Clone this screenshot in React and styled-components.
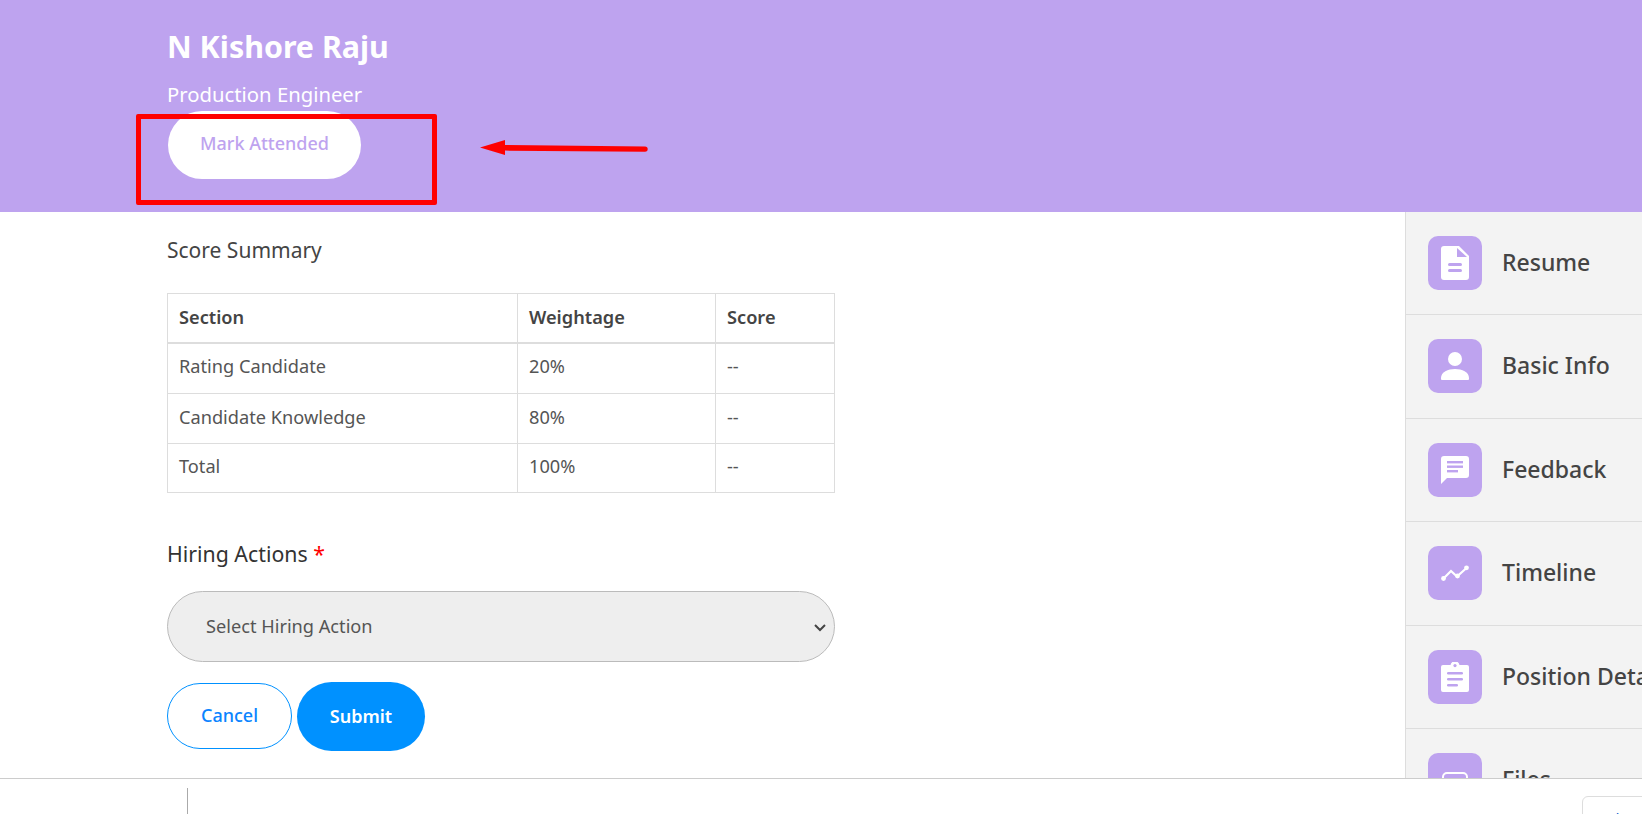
import React from "react";
import styled, { createGlobalStyle } from "styled-components";

const purple = "#bea3ef";
const FONT = `"Noto Sans", "Open Sans", sans-serif`;

const rows = [
  ["Rating Candidate", "20%", "--"],
  ["Candidate Knowledge", "80%", "--"],
  ["Total", "100%", "--"],
];

const DocIcon = () => (
  <svg width="28" height="34" viewBox="0 0 28 34">
    <path d="M3 0h15l10 10v21a3 3 0 0 1-3 3H3a3 3 0 0 1-3-3V3a3 3 0 0 1 3-3z" fill="#fff" />
    <path d="M16 2v9h10z" fill={purple} />
    <rect x="7" y="17" width="14" height="3" rx="1.5" fill={purple} />
    <rect x="7" y="23" width="14" height="3" rx="1.5" fill={purple} />
  </svg>
);

const UserIcon = () => (
  <svg width="28" height="28" viewBox="0 0 28 28">
    <circle cx="14" cy="7" r="7" fill="#fff" />
    <path d="M0 26c0-6 7-9 14-9s14 3 14 9v1a1 1 0 0 1-1 1H1a1 1 0 0 1-1-1z" fill="#fff" />
  </svg>
);

const ChatIcon = () => (
  <svg width="28" height="28" viewBox="0 0 28 28">
    <path d="M3 0h22a3 3 0 0 1 3 3v16a3 3 0 0 1-3 3H6l-6 6V3a3 3 0 0 1 3-3z" fill="#fff" />
    <rect x="6" y="5" width="16" height="2.4" fill={purple} />
    <rect x="6" y="9.5" width="16" height="2.4" fill={purple} />
    <rect x="6" y="14" width="11" height="2.4" fill={purple} />
  </svg>
);

const TrendIcon = () => (
  <svg width="28" height="16" viewBox="0 0 28 16" fill="none">
    <path d="M2.5 13.5L10 6l6 5.5L25.5 3" stroke="#fff" strokeWidth="2.2" />
    <circle cx="2.5" cy="13.5" r="2.4" fill="#fff" />
    <circle cx="16.5" cy="11" r="2.4" fill="#fff" />
    <circle cx="25.5" cy="2.8" r="2.4" fill="#fff" />
  </svg>
);

const ClipboardIcon = () => (
  <svg width="28" height="30" viewBox="0 0 28 30">
    <path d="M2 3h7.5a4.6 4.6 0 0 1 9 0H26a2 2 0 0 1 2 2v23a2 2 0 0 1-2 2H2a2 2 0 0 1-2-2V5a2 2 0 0 1 2-2z" fill="#fff" />
    <circle cx="14" cy="3.6" r="1.6" fill={purple} />
    <rect x="6" y="10" width="16" height="2.6" rx="1.3" fill={purple} />
    <rect x="6" y="16" width="16" height="2.6" rx="1.3" fill={purple} />
    <rect x="6" y="22" width="11" height="2.6" rx="1.3" fill={purple} />
  </svg>
);

const FolderIcon = () => (
  <svg width="26" height="16" viewBox="0 0 26 16" fill="none">
    <rect x="1" y="1" width="24" height="14" rx="4" stroke="#fff" strokeWidth="2" />
  </svg>
);

const tabs = [
  ["Resume", <DocIcon />],
  ["Basic Info", <UserIcon />],
  ["Feedback", <ChatIcon />],
  ["Timeline", <TrendIcon />],
  ["Position Details", <ClipboardIcon />],
  ["Files", <FolderIcon />],
];

function App() {
  return (
    <Page>
      <GlobalStyle />
      <Header>
        <Name>N Kishore Raju</Name>
        <Role>Production Engineer</Role>
        <AttendButton>Mark Attended</AttendButton>
      </Header>
      <Body>
        <Main>
          <SectionTitle>Score Summary</SectionTitle>
          <ScoreTable>
            <colgroup>
              <col style={{ width: 350 }} />
              <col style={{ width: 198 }} />
              <col />
            </colgroup>
            <thead>
              <tr>
                <Th>Section</Th>
                <Th>Weightage</Th>
                <Th>Score</Th>
              </tr>
            </thead>
            <tbody>
              {rows.map((r) => (
                <tr key={r[0]}>
                  {r.map((c, i) => (
                    <Td key={i}>{c}</Td>
                  ))}
                </tr>
              ))}
            </tbody>
          </ScoreTable>
          <FieldLabel>
            Hiring Actions <Required>*</Required>
          </FieldLabel>
          <SelectBox>
            <SelectText>Select Hiring Action</SelectText>
            <svg width="14" height="14" viewBox="0 0 14 14" fill="none">
              <path d="M2 5l5 5 5-5" stroke="#444" strokeWidth="2" />
            </svg>
          </SelectBox>
          <Actions>
            <CancelButton>Cancel</CancelButton>
            <SubmitButton>Submit</SubmitButton>
          </Actions>
        </Main>
        <Side>
          {tabs.map(([label, icon]) => (
            <SideRow key={label}>
              <IconTile>{icon}</IconTile>
              <SideLabel>{label}</SideLabel>
            </SideRow>
          ))}
        </Side>
      </Body>
      <Footer>
        <FooterRule />
        <FooterButton>Sh</FooterButton>
      </Footer>
      {/* annotation drawn on top of the screenshot */}
      <RedBox />
      <RedArrow width="170" height="18" viewBox="0 0 170 18">
        <path d="M0 8.5L25 1v5l140 1.4a2.7 2.7 0 0 1 0 5.4L25 11.6V16z" fill="#ff0000" />
      </RedArrow>
    </Page>
  );
}

const GlobalStyle = createGlobalStyle`
  html, body {
    margin: 0;
    padding: 0;
    height: 100%;
    overflow: hidden;
    background: #fff;
  }
  * {
    box-sizing: border-box;
  }
`;

const Page = styled.div`
  position: relative;
  width: 1642px;
  height: 814px;
  overflow: hidden;
  display: flex;
  flex-direction: column;
  font-family: ${FONT};
  color: #444;
`;

const Header = styled.div`
  height: 212px;
  flex-shrink: 0;
  background: ${purple};
  padding: 27px 0 0 167px;
`;

const Name = styled.div`
  font-size: 30.4px;
  line-height: 40px;
  font-weight: 700;
  color: #fff;
`;

const Role = styled.div`
  margin-top: 14px;
  font-size: 20.3px;
  line-height: 27px;
  color: #fff;
`;

const AttendButton = styled.div`
  width: 193px;
  height: 68px;
  margin: 3px 0 0 1px;
  padding-top: 18px;
  border-radius: 34px;
  background: #fff;
  color: ${purple};
  font-size: 18px;
  line-height: 28px;
  font-weight: 500;
  text-align: center;
`;

const Body = styled.div`
  flex: 1;
  min-height: 0;
  display: flex;
`;

const Main = styled.div`
  width: 1405px;
  flex-shrink: 0;
  padding: 25px 0 0 167px;
`;

const SectionTitle = styled.div`
  font-size: 21px;
  line-height: 27px;
  color: #444;
`;

const ScoreTable = styled.table`
  width: 668px;
  margin-top: 29px;
  border-collapse: collapse;
  table-layout: fixed;
  font-size: 18.2px;
`;

const Th = styled.th`
  height: 49px;
  padding: 0 11px 1px;
  border: 1px solid #ddd;
  border-bottom-width: 2px;
  text-align: left;
  font-weight: 600;
  color: #444;
`;

const Td = styled.td`
  height: 50px;
  padding: 0 11px 4px;
  border: 1px solid #ddd;
  color: #555;

  tr:first-child & {
    height: 51px;
  }

  tr:last-child & {
    height: 49px;
  }
`;

const FieldLabel = styled.div`
  margin-top: 47px;
  font-size: 21.3px;
  line-height: 28px;
  color: #333;
`;

const Required = styled.span`
  color: #ff0000;
`;

const SelectBox = styled.div`
  width: 668px;
  height: 71px;
  margin-top: 23px;
  padding: 0 7px 0 38px;
  display: flex;
  align-items: center;
  justify-content: space-between;
  border: 1px solid #bbb;
  border-radius: 36px;
  background: #eee;
  font-size: 18.2px;
  color: #555;
`;

const SelectText = styled.span`
  margin-bottom: 2px;
`;

const Actions = styled.div`
  display: flex;
  align-items: center;
  gap: 5px;
  margin-top: 20px;
`;

const CancelButton = styled.div`
  width: 125px;
  height: 66px;
  margin-bottom: 1px;
  padding-bottom: 3px;
  display: flex;
  align-items: center;
  justify-content: center;
  border: 1px solid #0091ff;
  border-radius: 33px;
  background: #fff;
  color: #0a84ff;
  font-size: 18px;
  font-weight: 500;
`;

const SubmitButton = styled.div`
  width: 128px;
  height: 69px;
  padding-bottom: 2px;
  display: flex;
  align-items: center;
  justify-content: center;
  border-radius: 35px;
  background: #0091ff;
  color: #fff;
  font-size: 18px;
  font-weight: 600;
`;

const Side = styled.div`
  flex: 1;
  min-width: 0;
  background: #f3f3f3;
  border-left: 1px solid #ddd;
  overflow: hidden;
`;

const SideRow = styled.div`
  height: 103.4px;
  padding: 24px 0 0 22px;
  display: flex;
  align-items: flex-start;
  gap: 20px;
  border-bottom: 1px solid #ddd;
  white-space: nowrap;
`;

const IconTile = styled.div`
  width: 54px;
  height: 54px;
  flex-shrink: 0;
  display: flex;
  align-items: center;
  justify-content: center;
  border-radius: 10px;
  background: ${purple};
`;

const SideLabel = styled.div`
  font-size: 23px;
  line-height: 52px;
  font-weight: 500;
  color: #444;
`;

const Footer = styled.div`
  position: absolute;
  left: 0;
  right: 0;
  bottom: 0;
  height: 36px;
  background: #fff;
  border-top: 1px solid #ccc;
`;

const FooterRule = styled.div`
  position: absolute;
  left: 187px;
  top: 9px;
  bottom: 0;
  width: 1px;
  background: #aaa;
`;

const FooterButton = styled.div`
  position: absolute;
  left: 1582px;
  top: 17px;
  width: 100px;
  height: 40px;
  padding: 12px 0 0 25px;
  border: 1px solid #ddd;
  border-radius: 6px;
  color: #0a58ca;
  font-size: 14px;
  line-height: 20px;
`;

const RedBox = styled.div`
  position: absolute;
  left: 136px;
  top: 114px;
  width: 301px;
  height: 91px;
  border: 5px solid #ff0000;
  border-radius: 2px;
`;

const RedArrow = styled.svg`
  position: absolute;
  left: 480px;
  top: 139px;
`;

export default App;
